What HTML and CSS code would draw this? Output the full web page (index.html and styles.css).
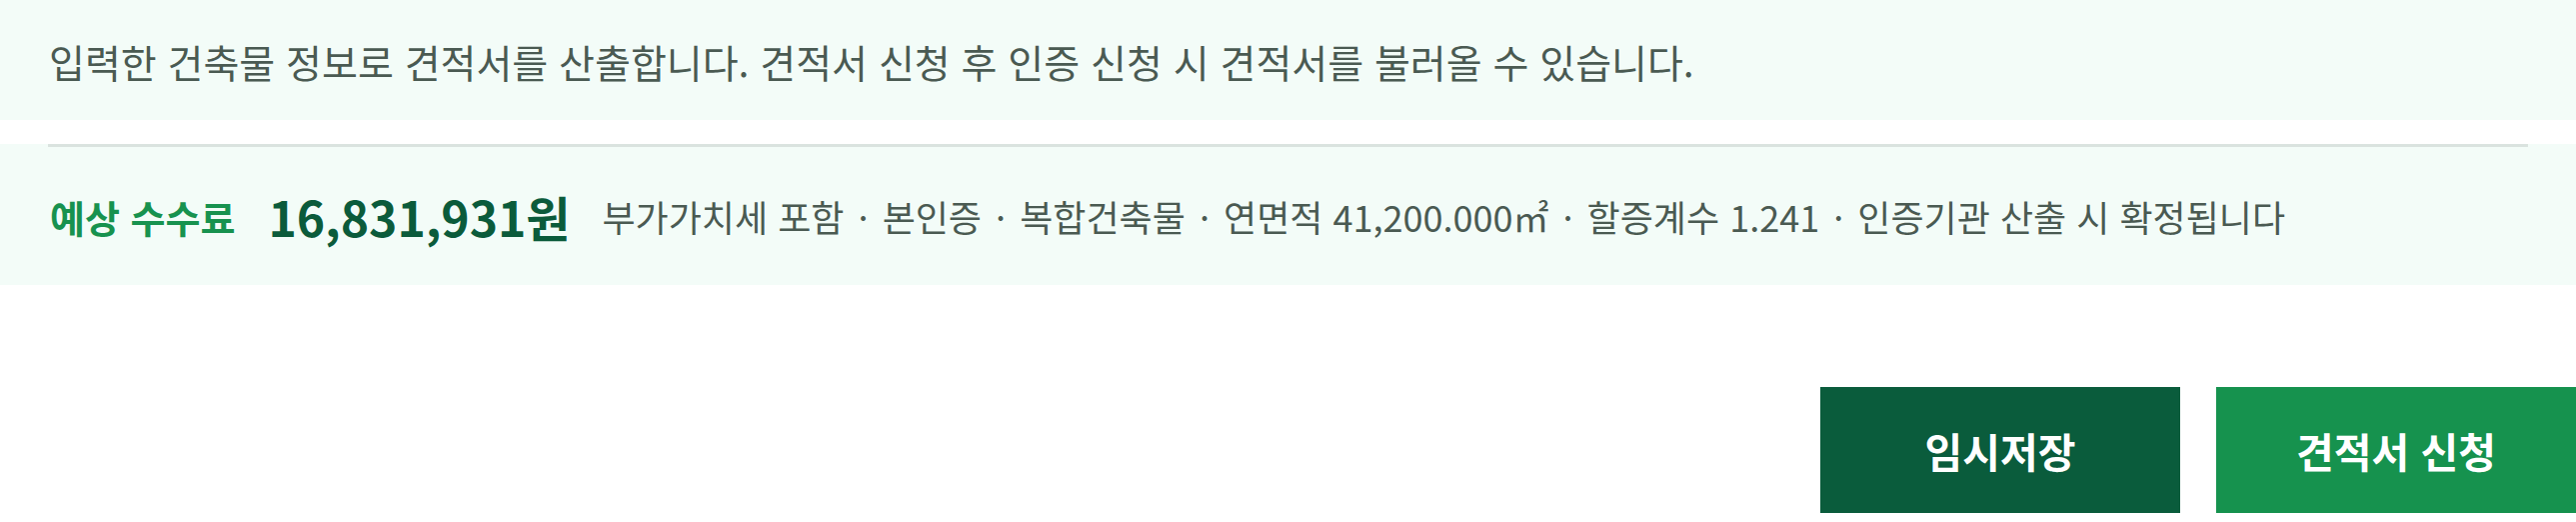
FILE: index.html
```html
<!DOCTYPE html>
<html lang="ko">
<head>
<meta charset="utf-8">
<link rel="stylesheet" href="styles.css">
</head>
<body>
<div class="notice">입력한 건축물 정보로 견적서를 산출합니다. 견적서 신청 후 인증 신청 시 견적서를 불러올 수 있습니다.</div>
<div class="summary">
  <div class="summary-inner">
    <span class="label">예상 수수료</span>
    <span class="amount">16,831,931원</span>
    <span class="detail">부가가치세 포함 <span class="sep">·</span> 본인증 <span class="sep">·</span> 복합건축물 <span class="sep">·</span> 연면적 41,200.000㎡ <span class="sep">·</span> 할증계수 1.241 <span class="sep">·</span> 인증기관 산출 시 확정됩니다</span>
  </div>
</div>
<div class="actions">
  <button class="btn btn-save">임시저장</button>
  <button class="btn btn-submit">견적서 신청</button>
</div>
</body>
</html>
```
FILE: styles.css
```css
html, body {
  margin: 0;
  padding: 0;
  background: #ffffff;
  font-family: "Noto Sans CJK KR", "Noto Sans", sans-serif;
}
.notice {
  height: 120px;
  box-sizing: border-box;
  background: #f3fcf8;
  display: flex;
  align-items: center;
  padding: 2px 49px 0;
  font-size: 39px;
  color: #4a5a52;
}
.summary {
  margin-top: 24px;
  background: #f3fcf8;
  padding: 0 48px;
}
.summary-inner {
  border-top: 3px solid #dae3df;
  height: 141px;
  box-sizing: border-box;
  display: flex;
  align-items: center;
  padding: 0 2px;
}
.label {
  font-size: 38px;
  font-weight: 700;
  color: #17924f;
  margin-right: 33px;
}
.amount {
  font-size: 48px;
  font-weight: 700;
  color: #0b5b3b;
  margin-right: 32px;
}
.detail {
  font-size: 36px;
  color: #4a5a52;
}
.sep {
  margin: 0 4px;
}
.actions {
  display: flex;
  justify-content: flex-end;
  gap: 36px;
  margin-top: 102px;
}
.btn {
  width: 360px;
  height: 126px;
  border: 0;
  border-radius: 0;
  color: #ffffff;
  font-family: "Noto Sans CJK KR", "Noto Sans", sans-serif;
  font-size: 41px;
  font-weight: 700;
  padding: 0;
}
.btn-save { background: #0a5c3c; }
.btn-submit { background: #16924e; }
```
